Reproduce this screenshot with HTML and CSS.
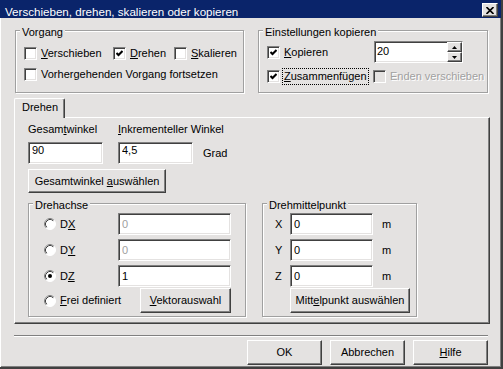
FILE: index.html
```html
<!DOCTYPE html>
<html lang="de">
<head>
    <meta charset="UTF-8">
    <meta name="viewport" content="width=device-width, initial-scale=1.0">
    <title>Verschieben, drehen, skalieren oder kopieren</title>
    <link rel="stylesheet" href="styles.css">
</head>
<body>
    <div class="window">
        <div class="titlebar">
            <span class="title">Verschieben, drehen, skalieren oder kopieren</span>
            <span class="close">
                <svg width="8" height="7" viewBox="0 0 8 7"><path d="M0.5 0 L7.5 7 M7.5 0 L0.5 7" stroke="#000" stroke-width="1.6" fill="none"/></svg>
            </span>
        </div>

        <div class="client">
            <!-- Vorgang / Einstellungen -->
            <div class="top-row">
                <div class="group group-vorgang">
                    <span class="legend">Vorgang</span>
                    <div class="check-row cols-vorgang">
                        <label class="check"><span class="box"></span><span><u>V</u>erschieben</span></label>
                        <label class="check"><span class="box"><svg width="7" height="7" viewBox="0 0 7 7"><polyline points="0.5,3 2.5,5 6.5,1" stroke="#000" stroke-width="2" fill="none"/></svg></span><span><u>D</u>rehen</span></label>
                        <label class="check"><span class="box"></span><span><u>S</u>kalieren</span></label>
                    </div>
                    <div class="check-row row-next">
                        <label class="check"><span class="box"></span><span>Vorhergehenden Vorgang fortsetzen</span></label>
                    </div>
                </div>

                <div class="group group-kopie">
                    <span class="legend">Einstellungen kopieren</span>
                    <div class="kopie-row">
                        <label class="check"><span class="box"><svg width="7" height="7" viewBox="0 0 7 7"><polyline points="0.5,3 2.5,5 6.5,1" stroke="#000" stroke-width="2" fill="none"/></svg></span><span><u>K</u>opieren</span></label>
                        <div class="spin">
                            <input class="spin-value" type="text" value="20">
                            <div class="updown">
                                <span class="spin-btn"><svg width="5" height="3" viewBox="0 0 5 3"><polygon points="2.5,0 5,3 0,3" fill="#000"/></svg></span>
                                <span class="spin-btn"><svg width="5" height="3" viewBox="0 0 5 3"><polygon points="0,0 5,0 2.5,3" fill="#000"/></svg></span>
                            </div>
                        </div>
                    </div>
                    <div class="check-row cols-kopie">
                        <label class="check"><span class="box"><svg width="7" height="7" viewBox="0 0 7 7"><polyline points="0.5,3 2.5,5 6.5,1" stroke="#000" stroke-width="2" fill="none"/></svg></span><span class="focus"><u>Z</u>usammenfügen</span></label>
                        <label class="check disabled"><span class="box"></span><span>Enden verschieben</span></label>
                    </div>
                </div>
            </div>

            <!-- Tab Drehen -->
            <div class="tabs">
                <div class="tab">Drehen</div>
            </div>
            <div class="panel">
                <div class="angles">
                    <span>Gesam<u>t</u>winkel</span>
                    <span class="span2"><u>I</u>nkrementeller Winkel</span>
                    <input class="edit edit-top" type="text" value="90">
                    <input class="edit edit-top" type="text" value="4,5">
                    <span class="unit-grad">Grad</span>
                </div>
                <button class="btn btn-wide">Gesamtwinkel <u>a</u>uswählen</button>

                <div class="axes">
                    <div class="group group-axis">
                        <span class="legend">Drehachse</span>
                        <div class="axis-line">
                            <label class="radio">
                                <svg width="12" height="12" viewBox="0 0 12 12"><circle cx="6" cy="6" r="5.5" fill="#fff" stroke="#fff"/><path d="M2.11 9.89 A5.5 5.5 0 0 1 9.89 2.11" fill="none" stroke="#808080"/><path d="M2.82 9.18 A4.5 4.5 0 0 1 9.18 2.82" fill="none" stroke="#404040"/></svg>
                                <span>D<u>X</u></span>
                            </label>
                            <input class="edit edit-axis" type="text" value="0" disabled>
                        </div>
                        <div class="axis-line">
                            <label class="radio">
                                <svg width="12" height="12" viewBox="0 0 12 12"><circle cx="6" cy="6" r="5.5" fill="#fff" stroke="#fff"/><path d="M2.11 9.89 A5.5 5.5 0 0 1 9.89 2.11" fill="none" stroke="#808080"/><path d="M2.82 9.18 A4.5 4.5 0 0 1 9.18 2.82" fill="none" stroke="#404040"/></svg>
                                <span>D<u>Y</u></span>
                            </label>
                            <input class="edit edit-axis" type="text" value="0" disabled>
                        </div>
                        <div class="axis-line">
                            <label class="radio">
                                <svg width="12" height="12" viewBox="0 0 12 12"><circle cx="6" cy="6" r="5.5" fill="#fff" stroke="#fff"/><path d="M2.11 9.89 A5.5 5.5 0 0 1 9.89 2.11" fill="none" stroke="#808080"/><path d="M2.82 9.18 A4.5 4.5 0 0 1 9.18 2.82" fill="none" stroke="#404040"/><circle cx="6" cy="6" r="2" fill="#000"/></svg>
                                <span>D<u>Z</u></span>
                            </label>
                            <input class="edit edit-axis" type="text" value="1">
                        </div>
                        <div class="axis-line line-last">
                            <label class="radio">
                                <svg width="12" height="12" viewBox="0 0 12 12"><circle cx="6" cy="6" r="5.5" fill="#fff" stroke="#fff"/><path d="M2.11 9.89 A5.5 5.5 0 0 1 9.89 2.11" fill="none" stroke="#808080"/><path d="M2.82 9.18 A4.5 4.5 0 0 1 9.18 2.82" fill="none" stroke="#404040"/></svg>
                                <span><u>F</u>rei definiert</span>
                            </label>
                            <button class="btn btn-vektor"><u>V</u>ektorauswahl</button>
                        </div>
                    </div>

                    <div class="group group-center">
                        <span class="legend">Drehmittelpunkt</span>
                        <div class="axis-line">
                            <span class="coord">X</span>
                            <input class="edit edit-center" type="text" value="0">
                            <span class="unit-m">m</span>
                        </div>
                        <div class="axis-line">
                            <span class="coord">Y</span>
                            <input class="edit edit-center" type="text" value="0">
                            <span class="unit-m">m</span>
                        </div>
                        <div class="axis-line">
                            <span class="coord">Z</span>
                            <input class="edit edit-center" type="text" value="0">
                            <span class="unit-m">m</span>
                        </div>
                        <div class="axis-line line-last">
                            <button class="btn btn-center">Mitt<u>e</u>lpunkt auswählen</button>
                        </div>
                    </div>
                </div>
            </div>

            <div class="separator"></div>

            <div class="buttons">
                <button class="btn btn-dialog">OK</button>
                <button class="btn btn-dialog">Abbrechen</button>
                <button class="btn btn-dialog"><u>H</u>ilfe</button>
            </div>
        </div>
    </div>
</body>
</html>
```

FILE: styles.css
```css
body {
    margin: 0;
    font-family: "Liberation Sans", Arial, sans-serif;
    font-size: 11px;
    line-height: 13px;
    color: #000;
    background: #e4e2e1;
}
.window {
    width: 503px;
    height: 369px;
    box-sizing: border-box;
    display: flex;
    flex-direction: column;
    background: #e4e2e1;
    border-right: 2px solid #404040;
    border-bottom: 2px solid #404040;
    box-shadow: inset -1px -1px 0 #808080;
}

/* title bar */
.titlebar {
    flex: none;
    height: 18px;
    display: flex;
    align-items: flex-start;
    background: #0a246a;
    color: #fff;
}
.title {
    margin: 5px 0 0 5px;
    font-size: 11.6px;
    line-height: 13px;
    white-space: nowrap;
}
.close {
    margin: 3px 3px 0 auto;
    width: 16px;
    height: 14px;
    box-sizing: border-box;
    display: flex;
    align-items: center;
    justify-content: center;
    background: #e4e2e1;
    border: 1px solid;
    border-color: #fff #404040 #404040 #fff;
    box-shadow: inset -1px -1px 0 #808080;
}

.client {
    flex: 1;
    border-left: 1px solid #fff;
    padding-top: 12px;
}

/* group boxes */
.group {
    position: relative;
    box-sizing: border-box;
    border: 1px solid #a0a0a0;
    box-shadow: inset 1px 1px 0 #fff, 1px 1px 0 #fff;
}
.legend {
    position: absolute;
    top: -5px;
    left: 4px;
    padding: 0 2px;
    background: #e4e2e1;
    white-space: nowrap;
}
.top-row {
    display: flex;
    gap: 14px;
    padding-left: 14px;
}
.group-vorgang {
    width: 229px;
    height: 63px;
    padding: 16px 0 0 8px;
}
.group-kopie {
    width: 230px;
    height: 63px;
    padding: 10px 0 0 8px;
}

/* checkboxes */
.check-row {
    display: grid;
    height: 13px;
    align-items: center;
}
.cols-vorgang {
    grid-template-columns: 89px 61px auto;
}
.row-next {
    margin-top: 8px;
}
.cols-kopie {
    grid-template-columns: 106px auto;
    margin-top: 5px;
}
.check {
    display: flex;
    align-items: center;
    gap: 4px;
    white-space: nowrap;
}
.box {
    flex: none;
    width: 13px;
    height: 13px;
    box-sizing: border-box;
    display: flex;
    align-items: center;
    justify-content: center;
    background: #fff;
    border: 1px solid;
    border-color: #808080 #fff #fff #808080;
    box-shadow: inset 1px 1px 0 #404040, inset -1px -1px 0 #e4e2e1;
}
.focus {
    margin-left: -2px;
    padding: 1px;
    border: 1px dotted #000;
}
.disabled {
    color: #a0a0a0;
    text-shadow: 1px 1px 0 #fff;
}
.disabled .box {
    background: #e4e2e1;
}
.kopie-row {
    display: grid;
    grid-template-columns: 107px 89px;
    height: 22px;
    align-items: center;
}

/* spin edit */
.spin {
    display: flex;
    height: 22px;
    box-sizing: border-box;
    background: #fff;
    border: 1px solid;
    border-color: #808080 #fff #fff #808080;
    box-shadow: inset 1px 1px 0 #404040, inset -1px -1px 0 #e4e2e1;
}
.spin-value {
    flex: 1;
    min-width: 0;
    margin: 0;
    padding: 0 0 2px 2px;
    border: none;
    background: transparent;
    font: inherit;
    color: #000;
    outline: none;
}
.updown {
    width: 15px;
    display: flex;
    flex-direction: column;
}
.spin-btn {
    flex: 1;
    box-sizing: border-box;
    display: flex;
    align-items: center;
    justify-content: center;
    background: #e4e2e1;
    border: 1px solid;
    border-color: #fff #404040 #404040 #fff;
    box-shadow: inset -1px -1px 0 #808080;
}

/* tab */
.tabs {
    display: flex;
    margin: 5px 0 0 13px;
}
.tab {
    position: relative;
    z-index: 1;
    width: 51px;
    height: 20px;
    box-sizing: border-box;
    padding: 2px 0 0 7px;
    background: #e4e2e1;
    border-top: 1px solid #fff;
    border-left: 1px solid #fff;
    border-right: 1px solid #404040;
    border-radius: 2px 2px 0 0;
    box-shadow: inset -1px 0 0 #808080;
}
.panel {
    margin: -1px 0 0 13px;
    width: 476px;
    height: 207px;
    box-sizing: border-box;
    padding: 5px 0 0 13px;
    border-top: 1px solid #fff;
    border-left: 1px solid #fff;
    border-right: 1px solid #404040;
    border-bottom: 1px solid #404040;
    box-shadow: inset -1px -1px 0 #808080;
}

/* edits */
.edit {
    box-sizing: border-box;
    height: 22px;
    margin: 0;
    padding: 0 3px;
    font: inherit;
    color: #000;
    background: #fff;
    border: 1px solid;
    border-color: #808080 #fff #fff #808080;
    box-shadow: inset 1px 1px 0 #404040, inset -1px -1px 0 #e4e2e1;
    outline: none;
}
.edit:disabled {
    color: #a0a0a0;
    -webkit-text-fill-color: #a0a0a0;
    background: #fff;
}
.edit-top {
    width: 75px;
    padding-bottom: 6px;
}
.angles {
    display: grid;
    grid-template-columns: 90px 75px auto;
    row-gap: 6px;
    align-items: center;
}
.span2 {
    grid-column: 2 / 4;
    white-space: nowrap;
}
.unit-grad {
    margin-left: 10px;
}

/* buttons */
.btn {
    display: block;
    box-sizing: border-box;
    margin: 0;
    padding: 0;
    text-align: center;
    font: inherit;
    color: #000;
    background: #e4e2e1;
    border: 1px solid;
    border-color: #fff #404040 #404040 #fff;
    box-shadow: inset -1px -1px 0 #808080;
    white-space: nowrap;
}
.btn-wide {
    margin-top: 5px;
    width: 138px;
    height: 24px;
}

/* Drehachse / Drehmittelpunkt */
.axes {
    display: flex;
    gap: 16px;
    margin-top: 10px;
}
.group-axis {
    width: 218px;
    height: 114px;
    padding: 9px 0 0 15px;
}
.group-center {
    width: 155px;
    height: 114px;
    padding: 9px 0 0 12px;
}
.axis-line {
    display: flex;
    align-items: center;
    width: 187px;
    height: 22px;
}
.axis-line + .axis-line {
    margin-top: 4px;
}
.axis-line.line-last {
    height: 25px;
    margin-top: 1px;
}
.radio {
    width: 74px;
    display: flex;
    align-items: center;
    gap: 4px;
    white-space: nowrap;
}
.radio svg {
    flex: none;
}
.edit-axis {
    width: 113px;
}
.btn-vektor {
    margin-left: auto;
    width: 91px;
    height: 25px;
}
.coord {
    width: 15px;
}
.edit-center {
    width: 83px;
}
.unit-m {
    margin-left: 9px;
}
.btn-center {
    margin-left: 15px;
    width: 120px;
    height: 25px;
}

/* bottom */
.separator {
    margin: 11px 0 0 13px;
    width: 474px;
    border-top: 1px solid #808080;
    border-bottom: 1px solid #fff;
}
.buttons {
    display: flex;
    justify-content: flex-end;
    gap: 8px;
    margin-top: 3px;
    padding-right: 13px;
}
.btn-dialog {
    width: 75px;
    height: 25px;
}
```
